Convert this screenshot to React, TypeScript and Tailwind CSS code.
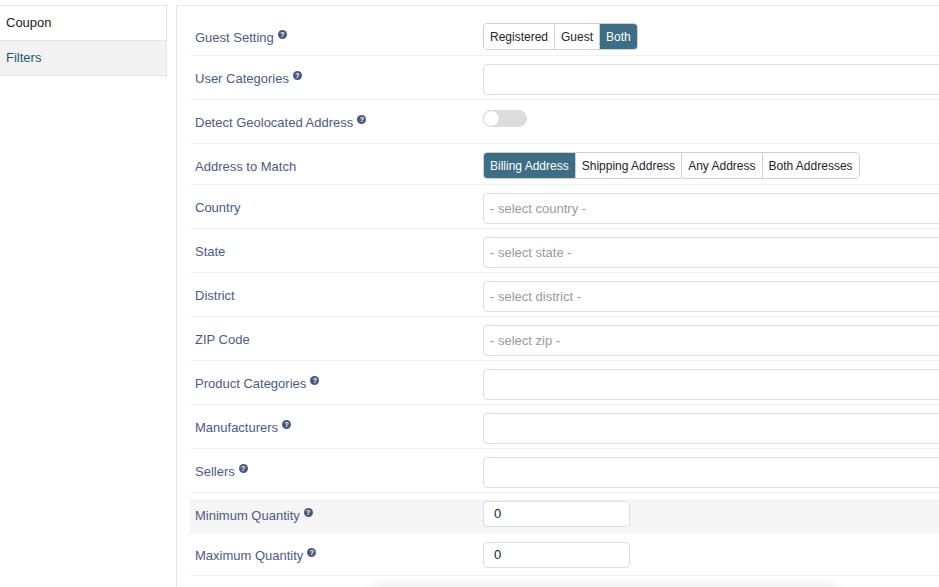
import React from "react";

const font = { fontFamily: '"Liberation Sans", Arial, sans-serif' };

function Help() {
  return (
    <span className="ml-[4px] inline-flex h-[9px] w-[9px] -translate-y-[5px] items-center justify-center rounded-full bg-[#4b5878] text-[7px] font-bold leading-none text-white">
      ?
    </span>
  );
}

function Label({ text, help }: { text: string; help?: boolean }) {
  return (
    <div className="w-[293px] shrink-0 pl-[5px] pt-[14px] text-[13px] leading-[18px] text-[#4d5a86]">
      {text}
      {help && <Help />}
    </div>
  );
}

function Segmented({ items, active }: { items: string[]; active: string }) {
  return (
    <div className="mt-[8px] flex h-[27px] overflow-hidden rounded-[4px] border border-[#cfcfcf]">
      {items.map((it, i) => (
        <div
          key={it}
          className={
            (it === active ? "bg-[#3d6e85] text-white " : "bg-white text-[#22262a] ") +
            (i > 0 ? "border-l border-[#cfcfcf] " : "") +
            "flex items-center px-[6px] text-[12px]"
          }
        >
          {it}
        </div>
      ))}
    </div>
  );
}

function TextInput({ placeholder }: { placeholder?: string }) {
  return (
    <div className="mt-[8px] flex h-[31px] w-[520px] items-center rounded-[4px] border border-[#dcdbe8] bg-white pl-[6px] text-[13px] text-[#9a9a9a]">
      {placeholder}
    </div>
  );
}

function Row({ h, children }: { h: string; children: React.ReactNode }) {
  return <div className={"flex border-b border-[#f1f1f3] " + h}>{children}</div>;
}

export default function App() {
  const selects = [
    ["Country", "- select country -"],
    ["State", "- select state -"],
    ["District", "- select district -"],
    ["ZIP Code", "- select zip -"],
  ];
  return (
    <div style={font} className="flex h-[587px] w-[939px] overflow-hidden bg-white pt-[5px]">
      <div className="h-[72px] w-[167px] shrink-0 border-r border-t border-[#e4e4e4] text-[13px]">
        <div className="flex h-[35px] items-center border-b border-[#e4e4e4] pl-[6px] text-[#222]">Coupon</div>
        <div className="flex h-[35px] items-center border-b border-[#e4e4e4] bg-[#f2f2f2] pl-[6px] text-[#24586f]">
          Filters
        </div>
      </div>
      <div className="ml-[9px] min-w-[900px] border-l border-t border-[#e7e7ea] pl-[13px] pt-[9px]">
        <Row h="h-[41px]">
          <Label text="Guest Setting" help />
          <Segmented items={["Registered", "Guest", "Both"]} active="Both" />
        </Row>
        <Row h="h-[44px]">
          <Label text="User Categories" help />
          <TextInput />
        </Row>
        <Row h="h-[44px]">
          <Label text="Detect Geolocated Address" help />
          <div className="relative mt-[10px] h-[17px] w-[44px] rounded-full bg-[#dcdcdc]">
            <div className="absolute left-0 top-0 h-[17px] w-[17px] rounded-full border border-[#d0d0d0] bg-white" />
          </div>
        </Row>
        <Row h="h-[41px]">
          <Label text="Address to Match" />
          <Segmented
            items={["Billing Address", "Shipping Address", "Any Address", "Both Addresses"]}
            active="Billing Address"
          />
        </Row>
        {selects.map(([l, p]) => (
          <Row key={l} h="h-[44px]">
            <Label text={l} />
            <TextInput placeholder={p} />
          </Row>
        ))}
        {["Product Categories", "Manufacturers", "Sellers"].map((l) => (
          <Row key={l} h="h-[44px]">
            <Label text={l} help />
            <TextInput />
          </Row>
        ))}
        <div className="pt-[6px]">
          <div className="flex h-[35px] bg-[#f5f5f5]">
            <div className="w-[293px] shrink-0 pl-[5px] pt-[8px] text-[13px] leading-[18px] text-[#4d5a86]">
              Minimum Quantity
              <Help />
            </div>
            <div className="mt-[2px] flex h-[26px] w-[147px] items-center rounded-[4px] border border-[#dcdbe8] bg-white pl-[10px] text-[13px] text-[#222]">
              0
            </div>
          </div>
        </div>
        <Row h="h-[42px]">
          <div className="w-[293px] shrink-0 pl-[5px] pt-[13px] text-[13px] leading-[18px] text-[#4d5a86]">
            Maximum Quantity
            <Help />
          </div>
          <div className="mt-[8px] flex h-[26px] w-[147px] items-center rounded-[4px] border border-[#dcdbe8] bg-white pl-[10px] text-[13px] text-[#222]">
            0
          </div>
        </Row>
        <div className="ml-[180px] mt-[12px] h-[30px] w-[470px] rounded-[6px] bg-white shadow-[0_-4px_10px_rgba(0,0,0,0.07)]" />
      </div>
    </div>
  );
}
